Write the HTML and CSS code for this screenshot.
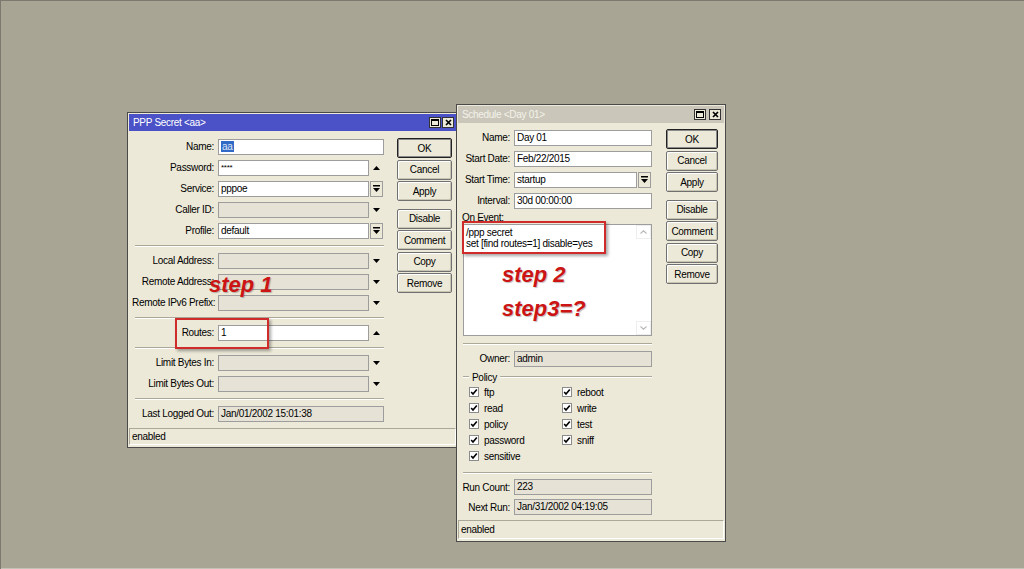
FILE: index.html
```html
<!DOCTYPE html>
<html lang="en">
<head>
    <meta charset="UTF-8">
    <title>PPP Secret / Schedule</title>
    <link rel="stylesheet" href="styles.css">
</head>
<body>
<div class="desktop">

    <!-- PPP Secret window -->
    <div class="win ppp">
        <div class="titlebar">
            <span>PPP Secret &lt;aa&gt;</span>
            <div class="tbtns">
                <span class="tb"><svg width="8" height="7" viewBox="0 0 8 7"><rect x="0.5" y="0.5" width="7" height="6" fill="none" stroke="#000"/><rect x="0" y="0" width="8" height="2" fill="#000"/></svg></span>
                <span class="tb"><svg width="7" height="7" viewBox="0 0 7 7"><path d="M1 1L6 6M6 1L1 6" stroke="#000" stroke-width="1.7"/></svg></span>
            </div>
        </div>
        <div class="wbody">
            <div class="form">
                <div class="row"><label>Name:</label><div class="fw"><div class="in"><span class="sel">aa</span></div></div></div>
                <div class="row"><label>Password:</label><div class="fw"><div class="in pw">****</div><span class="trail"><svg width="7" height="4" viewBox="0 0 7 4"><polygon points="0,4 7,4 3.5,0" fill="#000"/></svg></span></div></div>
                <div class="row"><label>Service:</label><div class="fw"><div class="in">pppoe</div><span class="trail"><span class="dd"><svg width="7" height="7" viewBox="0 0 7 7"><rect x="0" y="0" width="7" height="1.5" fill="#000"/><polygon points="0,3 7,3 3.5,7" fill="#000"/></svg></span></span></div></div>
                <div class="row"><label>Caller ID:</label><div class="fw"><div class="in dis"></div><span class="trail"><svg width="7" height="4" viewBox="0 0 7 4"><polygon points="0,0 7,0 3.5,4" fill="#000"/></svg></span></div></div>
                <div class="row"><label>Profile:</label><div class="fw"><div class="in">default</div><span class="trail"><span class="dd"><svg width="7" height="7" viewBox="0 0 7 7"><rect x="0" y="0" width="7" height="1.5" fill="#000"/><polygon points="0,3 7,3 3.5,7" fill="#000"/></svg></span></span></div></div>
                <div class="sep"></div>
                <div class="row"><label>Local Address:</label><div class="fw"><div class="in dis"></div><span class="trail"><svg width="7" height="4" viewBox="0 0 7 4"><polygon points="0,0 7,0 3.5,4" fill="#000"/></svg></span></div></div>
                <div class="row"><label>Remote Address:</label><div class="fw"><div class="in dis"></div><span class="trail"><svg width="7" height="4" viewBox="0 0 7 4"><polygon points="0,0 7,0 3.5,4" fill="#000"/></svg></span></div></div>
                <div class="row"><label>Remote IPv6 Prefix:</label><div class="fw"><div class="in dis"></div><span class="trail"><svg width="7" height="4" viewBox="0 0 7 4"><polygon points="0,0 7,0 3.5,4" fill="#000"/></svg></span></div></div>
                <div class="sep"></div>
                <div class="row"><label>Routes:</label><div class="fw"><div class="in">1</div><span class="trail"><svg width="7" height="4" viewBox="0 0 7 4"><polygon points="0,4 7,4 3.5,0" fill="#000"/></svg></span></div></div>
                <div class="sep"></div>
                <div class="row"><label>Limit Bytes In:</label><div class="fw"><div class="in dis"></div><span class="trail"><svg width="7" height="4" viewBox="0 0 7 4"><polygon points="0,0 7,0 3.5,4" fill="#000"/></svg></span></div></div>
                <div class="row"><label>Limit Bytes Out:</label><div class="fw"><div class="in dis"></div><span class="trail"><svg width="7" height="4" viewBox="0 0 7 4"><polygon points="0,0 7,0 3.5,4" fill="#000"/></svg></span></div></div>
                <div class="sep"></div>
                <div class="row"><label>Last Logged Out:</label><div class="fw"><div class="in dis">Jan/01/2002 15:01:38</div></div></div>
            </div>
            <div class="btns">
                <div class="btn def">OK</div>
                <div class="btn">Cancel</div>
                <div class="btn">Apply</div>
                <div class="btn gapb">Disable</div>
                <div class="btn">Comment</div>
                <div class="btn">Copy</div>
                <div class="btn">Remove</div>
            </div>
        </div>
        <div class="status">enabled</div>
    </div>

    <!-- Schedule window -->
    <div class="win sched">
        <div class="titlebar inactive">
            <span>Schedule &lt;Day 01&gt;</span>
            <div class="tbtns">
                <span class="tb"><svg width="8" height="7" viewBox="0 0 8 7"><rect x="0.5" y="0.5" width="7" height="6" fill="none" stroke="#000"/><rect x="0" y="0" width="8" height="2" fill="#000"/></svg></span>
                <span class="tb"><svg width="7" height="7" viewBox="0 0 7 7"><path d="M1 1L6 6M6 1L1 6" stroke="#000" stroke-width="1.7"/></svg></span>
            </div>
        </div>
        <div class="wbody">
            <div class="form">
                <div class="row"><label>Name:</label><div class="fw"><div class="in">Day 01</div></div></div>
                <div class="row"><label>Start Date:</label><div class="fw"><div class="in">Feb/22/2015</div></div></div>
                <div class="row"><label>Start Time:</label><div class="fw"><div class="in">startup</div><span class="trail"><span class="dd"><svg width="7" height="7" viewBox="0 0 7 7"><rect x="0" y="0" width="7" height="1.5" fill="#000"/><polygon points="0,3 7,3 3.5,7" fill="#000"/></svg></span></span></div></div>
                <div class="row"><label>Interval:</label><div class="fw"><div class="in">30d 00:00:00</div></div></div>
                <div class="evlabel">On Event:</div>
                <div class="textarea">
                    <div class="code">/ppp secret<br>set [find routes=1] disable=yes</div>
                    <div class="vscroll">
                        <span class="sarr"><svg width="7" height="4" viewBox="0 0 7 4"><polyline points="0.5,3.5 3.5,0.8 6.5,3.5" fill="none" stroke="#b9b9b9" stroke-width="1.2"/></svg></span>
                        <span class="sarr"><svg width="7" height="4" viewBox="0 0 7 4"><polyline points="0.5,0.5 3.5,3.2 6.5,0.5" fill="none" stroke="#b9b9b9" stroke-width="1.2"/></svg></span>
                    </div>
                </div>
                <div class="sep"></div>
                <div class="row"><label>Owner:</label><div class="fw"><div class="in dis">admin</div></div></div>
                <div class="grp">Policy</div>
                <div class="checks">
                    <div class="cb"><span class="box"><svg width="8" height="8" viewBox="0 0 8 8"><polyline points="1.2,4 3,6 6.8,1.5" fill="none" stroke="#000" stroke-width="1.6"/></svg></span>ftp</div>
                    <div class="cb"><span class="box"><svg width="8" height="8" viewBox="0 0 8 8"><polyline points="1.2,4 3,6 6.8,1.5" fill="none" stroke="#000" stroke-width="1.6"/></svg></span>reboot</div>
                    <div class="cb"><span class="box"><svg width="8" height="8" viewBox="0 0 8 8"><polyline points="1.2,4 3,6 6.8,1.5" fill="none" stroke="#000" stroke-width="1.6"/></svg></span>read</div>
                    <div class="cb"><span class="box"><svg width="8" height="8" viewBox="0 0 8 8"><polyline points="1.2,4 3,6 6.8,1.5" fill="none" stroke="#000" stroke-width="1.6"/></svg></span>write</div>
                    <div class="cb"><span class="box"><svg width="8" height="8" viewBox="0 0 8 8"><polyline points="1.2,4 3,6 6.8,1.5" fill="none" stroke="#000" stroke-width="1.6"/></svg></span>policy</div>
                    <div class="cb"><span class="box"><svg width="8" height="8" viewBox="0 0 8 8"><polyline points="1.2,4 3,6 6.8,1.5" fill="none" stroke="#000" stroke-width="1.6"/></svg></span>test</div>
                    <div class="cb"><span class="box"><svg width="8" height="8" viewBox="0 0 8 8"><polyline points="1.2,4 3,6 6.8,1.5" fill="none" stroke="#000" stroke-width="1.6"/></svg></span>password</div>
                    <div class="cb"><span class="box"><svg width="8" height="8" viewBox="0 0 8 8"><polyline points="1.2,4 3,6 6.8,1.5" fill="none" stroke="#000" stroke-width="1.6"/></svg></span>sniff</div>
                    <div class="cb"><span class="box"><svg width="8" height="8" viewBox="0 0 8 8"><polyline points="1.2,4 3,6 6.8,1.5" fill="none" stroke="#000" stroke-width="1.6"/></svg></span>sensitive</div>
                </div>
                <div class="sep low"></div>
                <div class="row short"><label>Run Count:</label><div class="fw"><div class="in dis">223</div></div></div>
                <div class="row short"><label>Next Run:</label><div class="fw"><div class="in dis">Jan/31/2002 04:19:05</div></div></div>
            </div>
            <div class="btns">
                <div class="btn def">OK</div>
                <div class="btn">Cancel</div>
                <div class="btn">Apply</div>
                <div class="btn gapb">Disable</div>
                <div class="btn">Comment</div>
                <div class="btn">Copy</div>
                <div class="btn">Remove</div>
            </div>
        </div>
        <div class="status">enabled</div>
    </div>

    <!-- annotations -->
    <div class="mark mark-routes"></div>
    <div class="mark mark-event"></div>
    <div class="note note1">step 1</div>
    <div class="note note2">step 2</div>
    <div class="note note3">step3=?</div>
</div>
</body>
</html>
```

FILE: styles.css
```css
body {
    margin: 0;
    background: #a8a595;
    font-family: "Liberation Sans", Arial, sans-serif;
    font-size: 10px;
    letter-spacing: -0.3px;
    color: #000;
}
.desktop {
    position: relative;
    width: 1024px;
    height: 569px;
    overflow: hidden;
    background: #a8a595;
    box-shadow: inset 1px 1px 0 #7c7a6e, inset 0 -1px 0 #c4c2b6;
}

/* windows */
.win {
    position: absolute;
    background: #ece9d8;
    border: 1px solid #4a4a4a;
    padding: 1px;
    box-sizing: border-box;
}
.ppp {
    left: 127px;
    top: 112px;
    width: 331px;
}
.sched {
    left: 456px;
    top: 104px;
    width: 270px;
}
.titlebar {
    height: 17px;
    display: flex;
    align-items: center;
    padding-left: 4px;
    background: #4b51c6;
    color: #fff;
}
.titlebar.inactive {
    background: #cac7ba;
    color: #f4f2ea;
}
.tbtns {
    margin-left: auto;
    margin-right: 2px;
    display: flex;
    gap: 1px;
}
.sched .tbtns {
    gap: 3px;
    margin-right: 3px;
}
.tb {
    width: 12px;
    height: 11px;
    box-sizing: border-box;
    border: 1px solid #333;
    background: #ece9d8;
    display: flex;
    align-items: center;
    justify-content: center;
}
.wbody {
    display: flex;
}

/* form */
.form {
    padding: 5px 0 0 3px;
}
.sched .form {
    padding: 4px 0 0 4px;
}
.row {
    display: grid;
    grid-template-columns: 82px 166px;
    column-gap: 4px;
    height: 21px;
    align-items: center;
}
.sched .row {
    grid-template-columns: 48px 138px;
}
.row.short {
    height: 20px;
}
label {
    text-align: right;
    white-space: nowrap;
}
.fw {
    display: flex;
    align-items: center;
    height: 16px;
}
.in {
    flex: 1;
    height: 16px;
    box-sizing: border-box;
    border: 1px solid #9d9d9d;
    background: #fff;
    padding: 0 2px;
    line-height: 14px;
    white-space: nowrap;
    overflow: hidden;
}
.in.dis {
    background: #e6e3d6;
}
.in.pw {
    font-size: 8px;
}
.sel {
    background: #3169c6;
    color: #dfe6f5;
    padding: 0 1px;
}
.trail {
    width: 15px;
    height: 16px;
    display: flex;
    align-items: center;
    justify-content: center;
}
.dd {
    width: 13px;
    height: 16px;
    box-sizing: border-box;
    border: 1px solid #9d9d9d;
    background: #ece9d8;
    display: flex;
    align-items: center;
    justify-content: center;
}
.sep {
    height: 9px;
    display: flex;
    align-items: center;
    margin-left: 3px;
    width: 249px;
}
.sched .sep {
    margin: 3px 0 0 1px;
    width: 189px;
}
.sched .sep.low {
    margin-top: 4px;
}
.sep::before {
    content: "";
    flex: 1;
    border-top: 1px solid #aca899;
    border-bottom: 1px solid #fff;
}

/* schedule specifics */
.evlabel {
    height: 12px;
    line-height: 12px;
    margin-top: 1px;
}
.textarea {
    margin-left: 1px;
    width: 189px;
    height: 112px;
    box-sizing: border-box;
    border: 1px solid #9d9d9d;
    background: #fff;
    display: flex;
}
.code {
    flex: 1;
    padding: 2px 2px;
    line-height: 11px;
}
.vscroll {
    width: 15px;
    display: flex;
    flex-direction: column;
    justify-content: space-between;
}
.sarr {
    height: 14px;
    display: flex;
    align-items: center;
    justify-content: center;
    border: 1px solid #eeeeee;
    box-sizing: border-box;
}
.grp {
    display: flex;
    align-items: center;
    height: 14px;
    margin: 1px 0 0 1px;
    width: 189px;
}
.grp::before,
.grp::after {
    content: "";
    border-top: 1px solid #aca899;
    border-bottom: 1px solid #fff;
}
.grp::before {
    width: 6px;
    margin-right: 3px;
}
.grp::after {
    flex: 1;
    margin-left: 3px;
}
.checks {
    display: grid;
    grid-template-columns: 93px auto;
    margin-left: 7px;
}
.cb {
    display: flex;
    align-items: center;
    height: 16px;
}
.box {
    width: 10px;
    height: 10px;
    box-sizing: border-box;
    border: 1px solid #8b8b8b;
    background: #fff;
    margin-right: 5px;
    display: flex;
    align-items: center;
    justify-content: center;
}

/* buttons */
.btns {
    display: flex;
    flex-direction: column;
    gap: 1.5px;
    width: 55px;
    margin-left: 13px;
    padding-top: 7px;
}
.sched .btns {
    width: 52px;
    margin-left: 14px;
    padding-top: 6px;
}
.btn {
    height: 20px;
    box-sizing: border-box;
    border: 1px solid #707070;
    border-radius: 2px;
    background: #ece9d8;
    box-shadow: inset 1px 1px 0 #fff, inset -1px -1px 0 #c9c5b3;
    display: flex;
    align-items: center;
    justify-content: center;
}
.btn.def {
    border-color: #222;
    box-shadow: inset 0 0 0 1px #8a8a8a;
}
.btn.gapb {
    margin-top: 6px;
}

/* status bar */
.status {
    height: 17px;
    box-sizing: border-box;
    margin: 4px 0 1px;
    padding-left: 2px;
    line-height: 15px;
    border: 1px solid;
    border-color: #aca899 #fff #fff #aca899;
}
.sched .status {
    height: 19px;
    margin-top: 3px;
    line-height: 17px;
}

/* annotations */
.mark {
    position: absolute;
    box-sizing: border-box;
    border: 2px solid #cf2b2b;
    box-shadow: 2px 2px 3px rgba(0, 0, 0, 0.35);
}
.mark-routes {
    left: 175px;
    top: 318px;
    width: 94px;
    height: 31px;
}
.mark-event {
    left: 462px;
    top: 221px;
    width: 144px;
    height: 33px;
}
.note {
    position: absolute;
    color: #cc1414;
    font: bold italic 22px/22px "Liberation Sans", Arial, sans-serif;
    letter-spacing: 0;
    text-shadow: 1px 1px 1px rgba(0, 0, 0, 0.25);
    white-space: nowrap;
}
.note1 {
    left: 209px;
    top: 274px;
}
.note2 {
    left: 502px;
    top: 264px;
}
.note3 {
    left: 502px;
    top: 298px;
}
```
